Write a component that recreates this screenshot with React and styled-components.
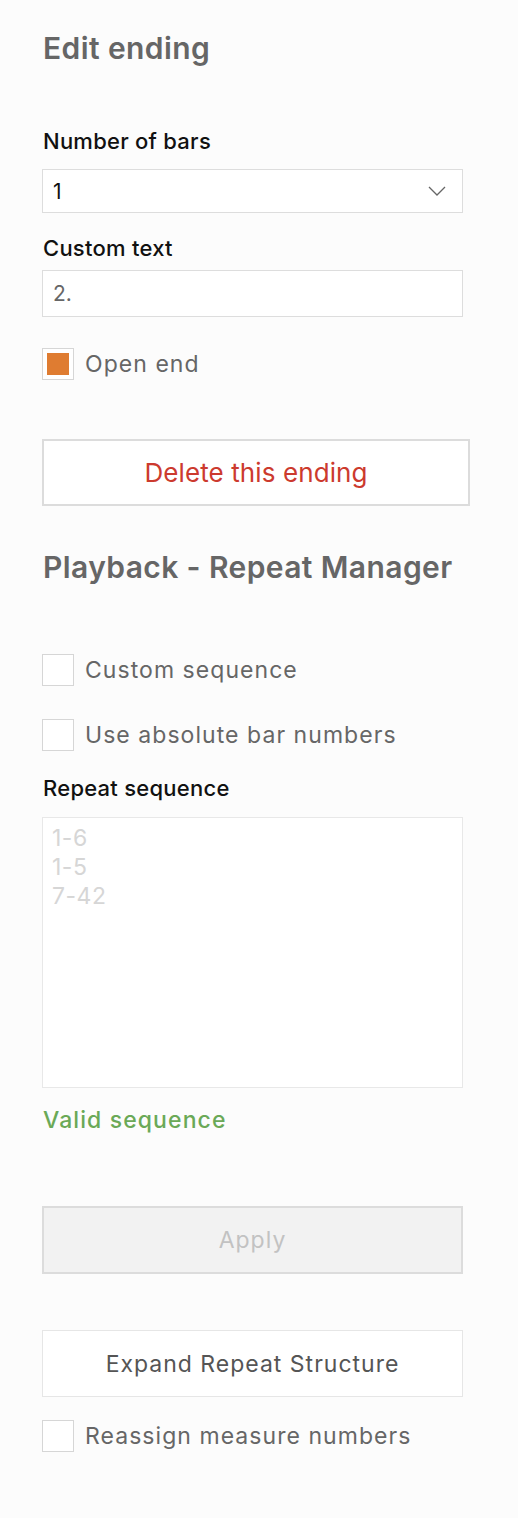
import React from 'react';
import styled, { createGlobalStyle } from 'styled-components';

const GlobalStyle = createGlobalStyle`
  html, body {
    margin: 0;
    padding: 0;
    background: #fcfcfc;
  }
  body {
    font-family: Inter, "Noto Sans", "Liberation Sans", sans-serif;
    -webkit-font-smoothing: antialiased;
  }
`;

const Panel = styled.div`
  display: flex;
  flex-direction: column;
  align-items: flex-start;
  padding: 31px 0 60px 42px;
  width: 421px;
`;

const Heading = styled.h2`
  margin: ${p => p.$mt || 0}px 0 0 1px;
  font-size: 30px;
  line-height: 34px;
  letter-spacing: 0.4px;
  font-weight: 600;
  color: #666;
`;

const Label = styled.div`
  margin: ${p => p.$mt || 0}px 0 0 1px;
  font-size: 22px;
  line-height: 26px;
  letter-spacing: 0.25px;
  font-weight: 500;
  color: #111;
`;

const Field = styled.div`
  box-sizing: border-box;
  margin-top: ${p => p.$mt || 0}px;
  width: 100%;
  height: ${p => p.$h}px;
  display: flex;
  align-items: center;
  justify-content: space-between;
  padding: 0 16px 0 10px;
  background: #fff;
  border: 1px solid #ddd;
  font-size: 21px;
  color: ${p => p.$muted ? '#666' : '#111'};
`;

const Chevron = () => (
  <svg width="18" height="10" viewBox="0 0 18 10">
    <polyline points="1,1 9,9 17,1" fill="none" stroke="#666" strokeWidth="1.3" />
  </svg>
);

const CheckRow = styled.label`
  display: flex;
  align-items: center;
  gap: 11px;
  margin-top: ${p => p.$mt || 0}px;
  font-size: 23px;
  letter-spacing: 1.05px;
  color: #666;
`;

const Box = styled.span`
  box-sizing: border-box;
  width: 32px;
  height: 32px;
  background: #fff;
  border: 1px solid #d6d6d6;
  padding: 4px;
  display: flex;
  &::after {
    content: '';
    flex: 1;
    background: ${p => p.$checked ? '#df7c31' : 'transparent'};
  }
`;

const Check = ({ checked, mt, children }) => (
  <CheckRow $mt={mt}>
    <Box $checked={checked} />
    {children}
  </CheckRow>
);

const Button = styled.button`
  box-sizing: border-box;
  margin-top: ${p => p.$mt || 0}px;
  width: ${p => p.$w || 421}px;
  height: ${p => p.$h || 67}px;
  font-family: inherit;
  font-size: ${p => p.$fs || 23}px;
  letter-spacing: ${p => p.$ls ?? 1}px;
  color: ${p => p.$color || '#555'};
  background: ${p => p.$bg || '#fff'};
  border: ${p => p.$bw || 1}px solid ${p => p.$border || '#e6e6e6'};
  cursor: pointer;
`;

const Sequence = styled.textarea`
  box-sizing: border-box;
  margin-top: 16px;
  width: 100%;
  height: 271px;
  padding: 6px 9px;
  resize: none;
  font-family: inherit;
  font-size: 23px;
  line-height: 29px;
  letter-spacing: 0.5px;
  background: #fff;
  border: 1px solid #e8e8e8;
  outline: none;
  &::placeholder {
    color: #d6d6d6;
  }
`;

const Valid = styled.div`
  margin: 18px 0 0 1px;
  font-size: 23px;
  line-height: 28px;
  letter-spacing: 1.1px;
  font-weight: 500;
  color: #6aa957;
`;

export default function App() {
  return (
    <>
      <GlobalStyle />
      <Panel>
        <Heading>Edit ending</Heading>
        <Label $mt={63}>Number of bars</Label>
        <Field $mt={15} $h={44}>
          <span>1</span>
          <Chevron />
        </Field>
        <Label $mt={22}>Custom text</Label>
        <Field $mt={9} $h={47} $muted>
          <span>2.</span>
        </Field>
        <Check checked mt={31}>Open end</Check>
        <Button $mt={59} $w={428} $fs={26} $ls={0.1} $color="#cc3a2e" $border="#dcdcdc" $bw={2}>
          Delete this ending
        </Button>
        <Heading $mt={44}>Playback - Repeat Manager</Heading>
        <Check mt={70}>Custom sequence</Check>
        <Check mt={33}>Use absolute bar numbers</Check>
        <Label $mt={24}>Repeat sequence</Label>
        <Sequence placeholder={'1-6\n1-5\n7-42'} />
        <Valid>Valid sequence</Valid>
        <Button $mt={72} $h={68} $bg="#f2f2f2" $color="#c2c2c2" $border="#dcdcdc" $bw={2}>
          Apply
        </Button>
        <Button $mt={56}>Expand Repeat Structure</Button>
        <Check mt={23}>Reassign measure numbers</Check>
      </Panel>
    </>
  );
}
